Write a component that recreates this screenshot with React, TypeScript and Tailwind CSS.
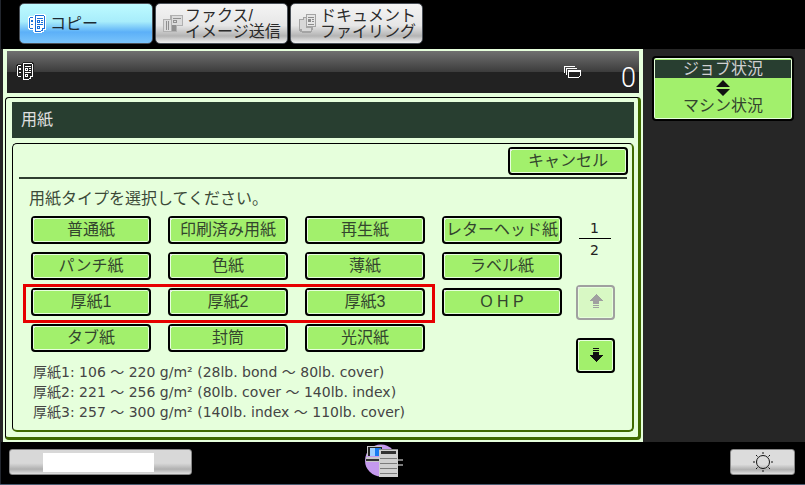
import type { ReactNode } from "react";

const JP = "font-['Liberation_Sans','Noto_Sans_CJK_JP',sans-serif]";

function CopyIcon({ halo, stroke, fill, detail }: { halo: string; stroke: string; fill: string; detail: string }) {
  return (
    <svg width="18" height="19" viewBox="0 0 18 19" shapeRendering="crispEdges">
      {/* back sheet */}
      <path d="M1 2h9v1h1v12h-1v1h-9v-1h-1v-12h1z" fill={halo} />
      <path d="M2 3h8v12h-8v-1h-1v-10h1z" fill={stroke} />
      <path d="M2 4h7v10h-7z" fill={fill} />
      <path d="M3 6h2v2h-2zM3 10h2v1h-2z" fill={detail} />
      {/* front sheet */}
      <path d="M6 1h1v-1h10v1h1v15h-2v2h-2v1h-8v-1h-1v-16z" fill={halo} />
      <path d="M7 1h9v1h1v13h-2v2h-2v1h-6v-16z" fill={stroke} />
      <path d="M8 2h8v12h-2v2h-1v1h-5z" fill={fill} />
      <path d="M9 4h6v1h-6zM9 6h3v3h-3zM13 6h2v1h-2zM13 8h2v1h-2zM9 10h6v1h-6zM9 12h3v3h-3z" fill={detail} />
      <path d="M10 7h1v1h-1zM10 13h1v1h-1z" fill={fill} />
    </svg>
  );
}

function FaxIcon() {
  return (
    <svg width="20" height="19" viewBox="0 0 20 19" shapeRendering="crispEdges">
      <path d="M0 5h7v-4h13v11h-6v6h-14z" fill="#b0b0b0" />
      <path d="M1 6h7v11h-7zM9 2h10v9h-10z" fill="#dcdcdc" />
      <path d="M3 7h1v9h-1zM5 7h1v9h-1zM10 4h8v1h-8zM10 6h4v3h-4zM9 11h4v6h-4z" fill="#909090" />
      <path d="M11 7h2v1h-2z" fill="#dcdcdc" />
    </svg>
  );
}

function FilingIcon() {
  return (
    <svg width="20" height="21" viewBox="0 0 20 21" shapeRendering="crispEdges">
      <path d="M1 6h4v-2h3v-3h10v13h-3v3h-1v2h-1v1h-9v-1h-2v-1h-1z" fill="#a4a4a4" />
      <path d="M2 7h4v-2h2v10h5v3h-9v-2h-2z" fill="#d8d8d8" />
      <path d="M9 2h8v11h-8z" fill="#e6e6e6" />
      <path d="M10 4h6v1h-6zM10 6h3v3h-3zM14 6h2v1h-2zM14 8h2v1h-2zM10 11h6v1h-6z" fill="#8c8c8c" />
    </svg>
  );
}

function Tab({ active, icon, children, className }: { active?: boolean; icon: ReactNode; children: ReactNode; className: string }) {
  return (
    <div
      className={`${className} h-[41px] rounded-[5px] border border-[#4a5058] flex items-center ${
        active
          ? "bg-[linear-gradient(#bdfbff_0%,#a8edfb_45%,#5cb0f8_72%,#79c4fb_100%)]"
          : "bg-[linear-gradient(#f4f4f4_0%,#e6e6e6_55%,#b4b4b4_82%,#f2f2f2_100%)]"
      }`}
    >
      {icon}
      {children}
    </div>
  );
}

function PanelButton({ children, className = "", muted }: { children: ReactNode; className?: string; muted?: boolean }) {
  return (
    <div
      className={`relative flex items-center justify-center rounded-[4px] border-2 ${
        muted
          ? "border-[#a0a0a0] bg-[#d8f8c4] text-[#a0a0a0]"
          : "border-black bg-[#a2f06c] text-[#33452e]"
      } shadow-[inset_0_0_0_1px_#e6ffdc] text-[16px] leading-none ${className}`}
    >
      <span className="absolute left-0 top-0 h-[2px] w-[2px] bg-[#e6e6e6]" />
      {children}
    </div>
  );
}

function PaperButton({ label }: { label: string }) {
  return <PanelButton className="h-[28px] w-[120px]">{label}</PanelButton>;
}

const rows = [
  ["普通紙", "印刷済み用紙", "再生紙", "レターヘッド紙"],
  ["パンチ紙", "色紙", "薄紙", "ラベル紙"],
  ["厚紙1", "厚紙2", "厚紙3", "O H P"],
  ["タブ紙", "封筒", "光沢紙"],
];

export default function App() {
  return (
    <div className={`w-[805px] h-[485px] bg-black flex flex-col overflow-hidden shadow-[inset_1px_0_0_#22262e] ${JP}`}>
      {/* tabs */}
      <div className="h-[49px] pl-[19px] pt-[3px] flex gap-[2px] shrink-0">
        <Tab active className="w-[134px] pl-[8px] gap-[4px]" icon={<CopyIcon halo="#ffffff" stroke="#1a6fd8" fill="#ffffff" detail="#1a6fd8" />}>
          <span className="text-[16px] text-[#1c2a33]">コピー</span>
        </Tab>
        <Tab className="w-[133px] pl-[7px] gap-[2px]" icon={<FaxIcon />}>
          <span className="text-[16px] leading-[16px] text-[#2a2a2a] whitespace-nowrap">
            ファクス/
            <br />
            イメージ送信
          </span>
        </Tab>
        <Tab className="w-[133px] pl-[7px] gap-[2px]" icon={<FilingIcon />}>
          <span className="text-[16px] leading-[16px] text-[#2a2a2a] whitespace-nowrap">
            ドキュメント
            <br />
            ファイリング
          </span>
        </Tab>
      </div>

      <div className="h-[393px] bg-[#262626] flex shrink-0">
        {/* main column */}
        <div className="w-[640px] ml-[3px] bg-[#e6ffdc] flex flex-col pt-[2px]">
          <div className="mx-[4px] h-[42px] bg-[linear-gradient(#707070_0%,#3c3c3c_50%,#222222_51%,#222222_100%)] flex items-start pt-[11px] pl-[9px] text-white shrink-0">
            <CopyIcon halo="#222222" stroke="#ffffff" fill="#222222" detail="#ffffff" />
            <svg className="ml-[530px] mt-[4px]" width="17" height="13" viewBox="0 0 17 13" shapeRendering="crispEdges">
              <path d="M0 0h11v1h-11zM0 0h1v7h-1zM2 2h11v1h-11zM2 2h1v7h-1z" fill="#fff" />
              <path d="M4 4h13v5l-3 3h-10z" fill="#fff" />
              <path d="M5 6h11v3l-2 2h-9z" fill="#222" />
            </svg>
            <span className="ml-[40px] mt-[3px] text-[27px] leading-[27px] font-['Roboto',sans-serif] font-light">0</span>
          </div>

          {/* paper panel */}
          <div className="mt-[4px] ml-[2px] mr-[2px] h-[343px] rounded-[4px] border border-black border-r-[3px] border-b-[3px] border-r-[#3f6a00] border-b-[#3f6a00] bg-[#e6ffdc] pl-[6px] pr-[4px] pt-[4px] flex flex-col">
            <div className="h-[36px] bg-[#283e30] text-[#e0e0e0] text-[16px] flex items-center pl-[9px] shrink-0">用紙</div>
            <div className="relative mt-[5px] h-[289px] rounded-[5px] border border-black border-r-[2px] border-b-[2px] border-r-[#3f6a00] border-b-[#3f6a00] bg-[#e6ffdc] pl-[6px] pr-[5px] flex flex-col">
              <div className="h-[33px] pt-[3px] flex justify-end shrink-0">
                <PanelButton className="h-[28px] w-[120px] -mr-px">キャンセル</PanelButton>
              </div>
              <div className="h-[2px] bg-[#2f3f30] shrink-0" />
              <div className="mt-[10px] pl-[10px] text-[16px] leading-[20px] text-[#3c4a38]">用紙タイプを選択してください。</div>
              <div className="mt-[7px] flex">
                <div className="ml-[12px]">
                  <div className="flex flex-col gap-[8px]">
                    {rows.map((row, i) => (
                      <div key={i} className="flex gap-[17px]">
                        {row.map((label) => (
                          <PaperButton key={label} label={label} />
                        ))}
                      </div>
                    ))}
                  </div>
                  <div className="mt-[10px] ml-[2px] text-[14px] leading-[20px] text-[#444] whitespace-nowrap font-['DejaVu_Sans','Noto_Sans_CJK_JP',sans-serif]">
                    <div>厚紙1: 106 ～ 220 g/m² (28lb. bond ～ 80lb. cover)</div>
                    <div>厚紙2: 221 ～ 256 g/m² (80lb. cover ～ 140lb. index)</div>
                    <div>厚紙3: 257 ～ 300 g/m² (140lb. index ～ 110lb. cover)</div>
                  </div>
                </div>
                <div className="ml-[14px] w-[39px] flex flex-col items-start -mr-[40px]">
                  <div className="ml-[2px] w-[33px] mt-[2px] flex flex-col items-center text-[14px] leading-[20px] text-[#222] font-['DejaVu_Sans',sans-serif]">
                    <div>1</div>
                    <div className="w-[32px] h-[1px] bg-black" />
                    <div className="mt-[1px]">2</div>
                  </div>
                  <PanelButton muted className="mt-[25px] h-[35px] w-[39px]">
                    <svg width="16" height="17" viewBox="0 0 16 17" shapeRendering="crispEdges">
                      <path d="M8 0l7 7h-4v3h-6v-3h-4zM5 11h6v1h-6zM5 13h6v1h-6z" fill="#a0a0a0" />
                    </svg>
                  </PanelButton>
                  <PanelButton className="mt-[18px] h-[35px] w-[39px]">
                    <svg width="16" height="17" viewBox="0 0 16 17" shapeRendering="crispEdges">
                      <path d="M5 1h6v1h-6zM5 3h6v1h-6zM5 5h6v3h4l-7 7-7-7h4z" fill="#111" />
                    </svg>
                  </PanelButton>
                </div>
              </div>
              {/* selection outline */}
              <div className="absolute left-[10px] top-[140px] h-[39px] w-[412px] border-[3px] border-[#e60000] pointer-events-none" />
            </div>
          </div>
        </div>

        {/* job status */}
        <div className="pl-[9px] pt-[7px]">
          <div className="w-[142px] h-[65px] rounded-[4px] border-2 border-black bg-[#a2f06c] shadow-[inset_0_0_0_1px_#e6ffdc] px-[1px] pt-[2px] flex flex-col items-stretch text-[16px] leading-none">
            <div className="h-[18px] bg-[#283e30] text-[#d0d0d0] flex items-center justify-center">ジョブ状況</div>
            <svg className="mx-auto mt-[2px]" width="14" height="16" viewBox="0 0 14 16">
              <path d="M7 0l7 7h-14zM0 9h14l-7 7z" fill="#111" />
            </svg>
            <div className="text-center mt-[2px] text-[#33452e]">マシン状況</div>
          </div>
        </div>
      </div>

      {/* bottom bar */}
      <div className="flex-1 flex items-center pl-[9px] pr-[10px] pb-[2px] border-b border-[#4a5a70]">
        <div className="w-[183px] h-[26px] rounded-[3px] border border-[#888] bg-[linear-gradient(#d8d8d8_0%,#d8d8d8_55%,#b0b0b0_80%,#e0e0e0_100%)] flex items-center pl-[33px]">
          <div className="w-[111px] h-[19px] bg-white" />
        </div>
        <svg className="ml-[173px] -mt-[3px]" width="38" height="33" viewBox="0 0 38 33">
          <circle cx="16" cy="16.500" r="16" fill="#c59aee" />
          <g shapeRendering="crispEdges">
            <path d="M2 2h15v10h-15z" fill="#c8c8c8" />
            <path d="M3 3h14v9h-14z" fill="#222" />
            <path d="M5 4h11v8h-11z" fill="#1a7cf0" />
            <path d="M5 4h5v8h-5z" fill="#9fd0ff" />
            <path d="M1 13h17v5h-17z" fill="#c8c8c8" />
            <path d="M1 15h17v2h-17z" fill="#333" />
            <path d="M14 5h19v28h-19z" fill="#d0d0d0" />
            <path d="M14 5h19v1h-19z" fill="#8a8a8a" />
            <path d="M16 7h15v3h-15z" fill="#333" />
            <path d="M15 14h17v1h-17zM15 19h17v1h-17zM15 24h17v1h-17zM15 29h17v1h-17zM33 15h5v2h-5zM33 20h5v2h-5z" fill="#7c7c7c" />
          </g>
        </svg>
        <div className="ml-auto w-[65px] h-[26px] rounded-[3px] border border-[#888] bg-[linear-gradient(#dcdcdc_0%,#dcdcdc_60%,#b0b0b0_82%,#e0e0e0_100%)] flex items-center justify-center">
          <svg width="20" height="20" viewBox="0 0 20 20" fill="none" stroke="#111">
            <circle cx="10" cy="10" r="6.500" />
            <path d="M10 0v2M10 18v2M0 10h2M18 10h2M3 3l1.500 1.500M15.500 15.500l1.500 1.500M3 17l1.500-1.500M15.500 4.500l1.500-1.500" />
          </svg>
        </div>
      </div>
    </div>
  );
}
